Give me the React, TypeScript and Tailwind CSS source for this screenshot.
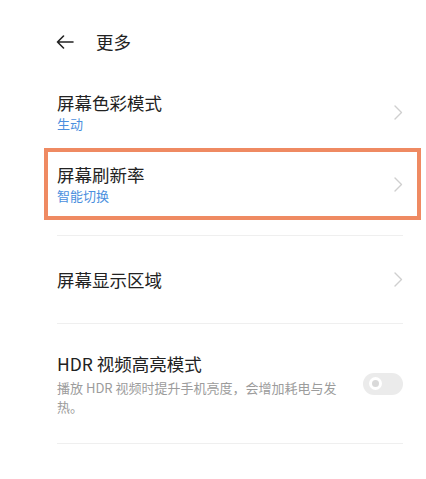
const font = { fontFamily: '"Noto Sans CJK SC", "Noto Sans", sans-serif' }

function Chevron() {
    return (
        <svg width="9" height="15" viewBox="0 0 9 15" fill="none" className="shrink-0">
            <path d="M1 1l6.5 6.5L1 14" stroke="#cfcfcf" strokeWidth="1.4" strokeLinecap="round" strokeLinejoin="round" />
        </svg>
    )
}

function NavRow({ title, value, boxed }: { title: string; value?: string; boxed?: boolean }) {
    return (
        <div className="relative flex h-[72px] items-center justify-between">
            <div className="flex flex-col">
                <span className="text-[17.5px] leading-[24px] text-[#222]">{title}</span>
                {value && <span className="text-[13px] leading-[18px] text-[#4b8fde]">{value}</span>}
            </div>
            <Chevron />
            {boxed && (
                <div className="pointer-events-none absolute -left-[13px] -right-[18px] top-0 bottom-0 border-4 border-[#ef8a62]" />
            )}
        </div>
    )
}

export default function App() {
    return (
        <div className="h-[479px] w-[426px] bg-white" style={font}>
            <div className="flex h-[76px] items-center gap-[22px] pt-[8px] pl-[56px]">
                <svg width="18" height="14" viewBox="0 0 18 14" fill="none">
                    <path d="M17 7H1.5M7.5 1L1.5 7l6 6" stroke="#222" strokeWidth="1.6" strokeLinecap="round" strokeLinejoin="round" />
                </svg>
                <span className="text-[17.5px] text-[#222]">更多</span>
            </div>

            <div className="pl-[57px] pr-[23px]">
                <NavRow title="屏幕色彩模式" value="生动" />
                <NavRow title="屏幕刷新率" value="智能切换" boxed />

                <div className="mt-[15px] h-px bg-[#efefef]" />

                <div className="flex h-[87px] items-center justify-between">
                    <span className="text-[17.5px] leading-[24px] text-[#222]">屏幕显示区域</span>
                    <Chevron />
                </div>

                <div className="h-px bg-[#efefef]" />

                <div className="flex h-[119px] items-center justify-between">
                    <div className="flex w-[290px] flex-col">
                        <span className="text-[17.5px] leading-[24px] text-[#222]">HDR 视频高亮模式</span>
                        <span className="mt-[2px] text-[13px] leading-[19px] text-[#9c9c9c]">
                            播放 HDR 视频时提升手机亮度，会增加耗电与发热。
                        </span>
                    </div>
                    <div className="flex h-[22px] w-[40px] items-center rounded-full bg-[#ebebeb] pl-[6px]">
                        <div className="flex h-[13px] w-[13px] items-center justify-center rounded-full bg-white">
                            <div className="h-[7px] w-[7px] rounded-full bg-[#d9d9d9]" />
                        </div>
                    </div>
                </div>

                <div className="h-px bg-[#efefef]" />
            </div>
        </div>
    )
}
